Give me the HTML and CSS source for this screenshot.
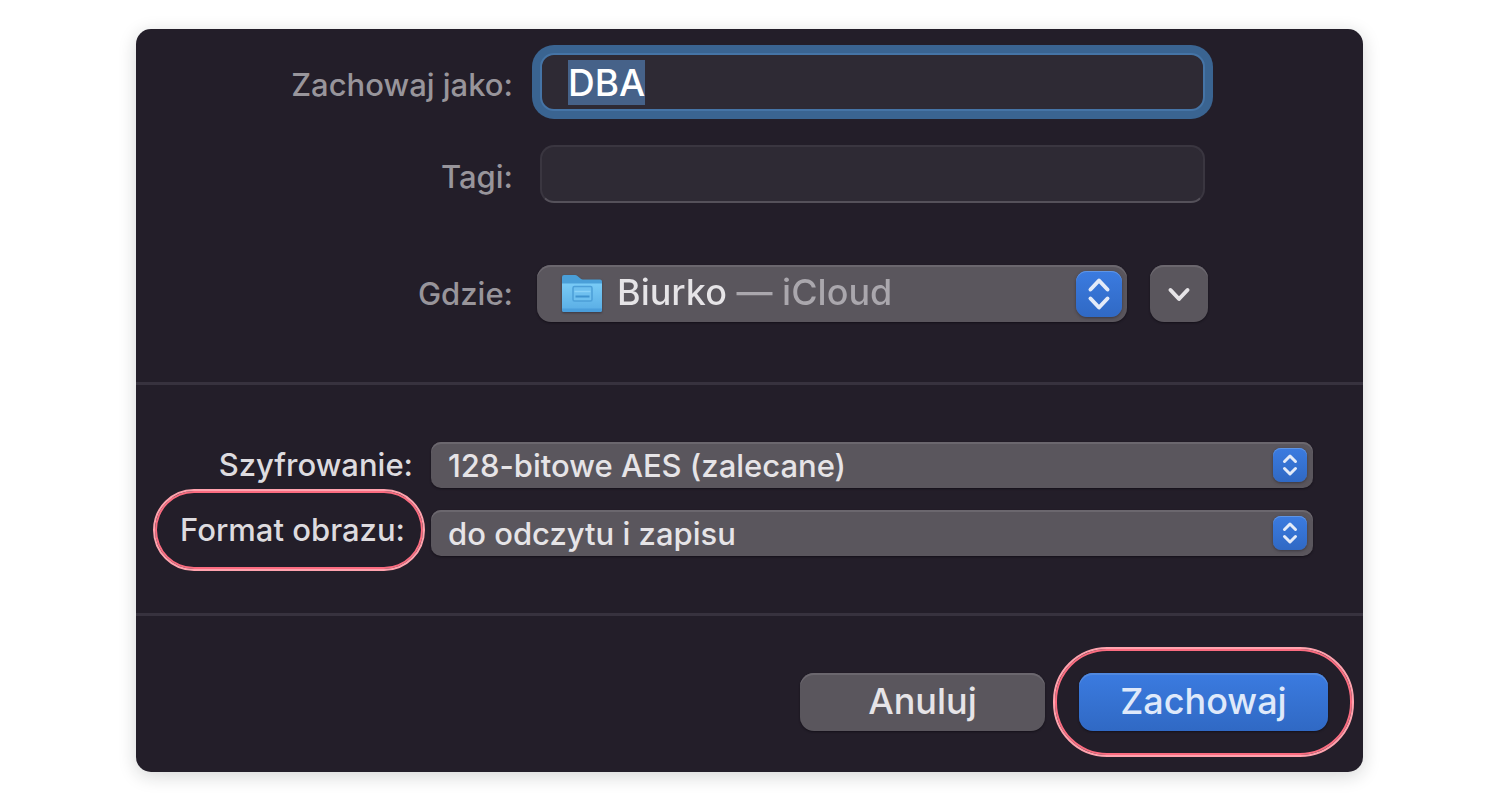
FILE: index.html
```html
<!DOCTYPE html>
<html lang="pl">
<head>
<meta charset="utf-8">
<title>Zachowaj jako</title>
<link rel="stylesheet" href="styles.css">
</head>
<body>
<form class="dialog">
  <section class="section section-file">
    <label class="label label-muted" for="name">Zachowaj jako:</label>
    <div class="inset"><input class="input input-focused" id="name" type="text" value="DBA" autocomplete="off" spellcheck="false"></div>

    <label class="label label-muted" for="tags">Tagi:</label>
    <div class="inset"><input class="input" id="tags" type="text"></div>

    <label class="label label-muted" for="where">Gdzie:</label>
    <div class="where">
      <div class="popup popup-large">
        <svg class="folder" viewBox="0 0 42 40" aria-hidden="true">
          <defs>
            <linearGradient id="front" x1="0" y1="0" x2="0" y2="1">
              <stop offset="0" stop-color="#79cbf6"/>
              <stop offset="1" stop-color="#58ace4"/>
            </linearGradient>
          </defs>
          <path d="M1 3q0-2 2-2h11q1.500 0 2.500 1l3 2.500q1 1 2.500 1H39q2 0 2 2V20H1z" fill="#4a9fd8"/>
          <path d="M1 9.500h40V36q0 2-2 2H3q-2 0-2-2z" fill="url(#front)"/>
          <path d="M1 34.500h40V36q0 2-2 2H3q-2 0-2-2z" fill="#4a9edb"/>
          <rect x="12" y="12.500" width="19" height="14.500" rx="1.500" fill="#6fc0ef" stroke="#4c9fd8" stroke-width="1.500"/>
          <path d="M13.500 17.500h16" stroke="#8bd2f7" stroke-width="1.500"/>
          <path d="M14.500 22.500h14" stroke="#3f93cf" stroke-width="2"/>
        </svg>
        <select class="select select-where" id="where"><option>Biurko — iCloud</option></select>
        <span class="tile tile-large" aria-hidden="true"><svg viewBox="0 0 46 46"><path d="M14.500 18.500l8.500-9 8.500 9M14.500 27.500l8.500 9 8.500-9" class="stroke"/></svg></span>
      </div>
      <button class="expand" type="button" aria-label="Rozwiń"><svg viewBox="0 0 58 57" aria-hidden="true"><path d="M20.500 25l8.500 9 8.500-9" class="stroke"/></svg></button>
    </div>
  </section>

  <section class="section section-options">
    <label class="label" for="encryption">Szyfrowanie:</label>
    <div class="popup">
      <select class="select" id="encryption"><option>128-bitowe AES (zalecane)</option></select>
      <span class="tile" aria-hidden="true"><svg viewBox="0 0 34 34"><path d="M11.500 13.500L17 8l5.500 5.500M11.500 20.500L17 26l5.500-5.500" class="stroke stroke-small"/></svg></span>
    </div>

    <label class="label label-marked" for="format">Format obrazu:</label>
    <div class="popup">
      <select class="select" id="format"><option>do odczytu i zapisu</option></select>
      <span class="tile" aria-hidden="true"><svg viewBox="0 0 34 34"><path d="M11.500 13.500L17 8l5.500 5.500M11.500 20.500L17 26l5.500-5.500" class="stroke stroke-small"/></svg></span>
    </div>
  </section>

  <footer class="actions">
    <button class="button" type="button">Anuluj</button>
    <div class="marked"><button class="button button-primary" type="submit">Zachowaj</button></div>
  </footer>
</form>
<script src="script.js"></script>
</body>
</html>
```
FILE: styles.css
```css
* {
  box-sizing: border-box;
}

body {
  margin: 0;
  padding: 29px 137px 28px 136px;
  background: #fff;
  font-family: Inter, "Liberation Sans", sans-serif;
}

.dialog {
  background: #231e29;
  border-radius: 15px;
  box-shadow: 0 4px 18px rgba(20, 30, 30, 0.18);
  color: #dddbdf;
}

.section {
  display: grid;
  align-items: center;
  border-bottom: 3px solid #37323e;
}

.section-file {
  grid-template-columns: 377px minmax(0, 1fr);
  column-gap: 24px;
  padding: 24px 155px 60px 0;
}

.section-options {
  grid-template-columns: 277px minmax(0, 1fr);
  gap: 22px 18px;
  padding: 57px 50px 57px 0;
}

.label {
  justify-self: end;
  font-size: 31px;
  font-weight: 500;
  line-height: 40px;
  white-space: nowrap;
}

.label-muted {
  margin-bottom: 28px;
  color: #98959b;
}

.label-marked {
  position: relative;
  align-self: start;
  margin-right: 8px;
}

.label-marked::after,
.marked::after {
  content: "";
  position: absolute;
  border: 2px solid #ffa3ae;
  box-shadow: inset 0 0 0 2px #fb6c80;
  pointer-events: none;
}

.label-marked::after {
  inset: -21px -20px -21px -27px;
  border-radius: 41px;
}

.inset {
  padding: 0 3px;
  margin-bottom: 34px;
}

.input {
  display: block;
  width: 100%;
  height: 58px;
  padding: 0 26px;
  border: 2px solid #3a3640;
  border-bottom-color: #55515a;
  border-radius: 14px;
  outline: none;
  background: #2e2a34;
  color: #fff;
  font: 500 37px Inter, "Liberation Sans", sans-serif;
}

.input-focused {
  border-color: #4574a6;
  box-shadow: 0 0 0 8px #3a6491;
}

.input::selection {
  background: #466289;
  color: #fff;
}

.where {
  display: flex;
  gap: 23px;
  margin-top: 28px;
}

.section-file .label[for="where"] {
  margin: 28px 0 0;
}

.popup {
  position: relative;
  display: flex;
  align-items: center;
  flex: 1;
  height: 46px;
  padding-left: 17px;
  border-radius: 10px;
  background: #5a565d;
  box-shadow: inset 0 2px 0 #6b676e, 0 1px 2px #15111a;
}

.popup-large {
  height: 57px;
  padding-left: 24px;
  border-radius: 14px;
}

.folder {
  width: 42px;
  height: 40px;
  margin-right: 14px;
  filter: drop-shadow(0 1px 1px #3b3840);
}

.select {
  flex: 1;
  min-width: 0;
  height: 100%;
  padding: 0;
  border: 0;
  outline: none;
  appearance: none;
  background: transparent;
  color: #e6e4e7;
  font: 500 31px Inter, "Liberation Sans", sans-serif;
}

.select-where {
  padding-bottom: 3px;
  background: linear-gradient(90deg, #e6e4e7 112px, #aaa7ad 112px);
  background-clip: text;
  color: transparent;
  font-size: 36px;
}

.tile {
  width: 34px;
  height: 34px;
  margin-right: 6px;
  border-radius: 8px;
  background: linear-gradient(#3b7be0, #3069c4);
  box-shadow: inset 0 1px 0 #5f95e6, 0 1px 3px #3a363e;
  pointer-events: none;
}

.tile-large {
  width: 46px;
  height: 46px;
  margin-right: 5px;
  border-radius: 11px;
}

.tile svg,
.expand svg {
  display: block;
  width: 100%;
  height: 100%;
}

.stroke {
  fill: none;
  stroke: #e4ebf8;
  stroke-width: 4;
  stroke-linecap: round;
  stroke-linejoin: round;
}

.stroke-small {
  stroke-width: 3;
}

.expand,
.button {
  height: 57px;
  padding: 0;
  border: 0;
  border-radius: 14px;
  background: #5a565d;
  box-shadow: inset 0 2px 0 #6b676e, 0 1px 2px #15111a;
  color: #e6e4e7;
  font: 500 36px Inter, "Liberation Sans", sans-serif;
}

.expand {
  width: 58px;
}

.expand .stroke {
  stroke: #e6e4e7;
}

.actions {
  display: flex;
  justify-content: flex-end;
  gap: 34px;
  padding: 57px 35px 41px;
}

.button {
  width: 245px;
  height: 58px;
  padding-bottom: 3px;
}

.marked {
  position: relative;
}

.marked::after {
  inset: -26px;
  border-radius: 54px;
}

.button-primary {
  display: block;
  width: 249px;
  background: linear-gradient(#3b7be0, #3069c4);
  box-shadow: inset 0 2px 0 #5089e0, 0 1px 2px #15111a;
  color: #dfe9fa;
}
```
FILE: script.js
```js
const nameField = document.getElementById("name");
nameField.focus();
nameField.select();
```
